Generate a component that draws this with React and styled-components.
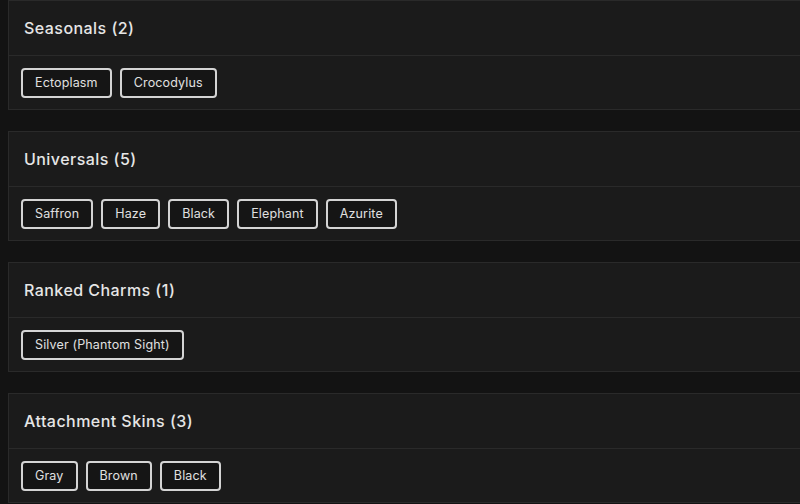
import styled, { createGlobalStyle } from "styled-components"

const GlobalStyle = createGlobalStyle`
  html, body {
    margin: 0;
    padding: 0;
    background: #131313;
    overflow: hidden;
  }
  body {
    font-family: "Inter", "Liberation Sans", sans-serif;
  }
`

const Page = styled.div`
  display: flex;
  flex-direction: column;
  gap: 21px;
  padding: 0 0 0 8px;
  width: 820px;
`
const Card = styled.section`
  background: #1b1b1b;
  border: 1px solid #2a2a2a;
`
const Header = styled.div`
  height: 54px;
  display: flex;
  align-items: center;
  padding: 0 15px;
  border-bottom: 1px solid #2a2a2a;

  h2 {
    margin: 0;
    font-size: 16px;
    font-weight: 500;
    color: #e6e6e6;
    letter-spacing: 0.45px;
  }
`
const Body = styled.div`
  height: 53px;
  display: flex;
  align-items: center;
  gap: 8px;
  padding: 0 12px;
`
const Tag = styled.button`
  height: 30px;
  padding: 0 12px;
  background: #151515;
  border: 2px solid #d4d4d4;
  border-radius: 4px;
  color: #e0e0e0;
  font-family: "Inter", "Liberation Sans", sans-serif;
  font-size: 12.5px;
  font-weight: 400;
  letter-spacing: 0.15px;
  cursor: pointer;
`

const groups = [
  { title: "Seasonals", items: ["Ectoplasm", "Crocodylus"] },
  { title: "Universals", items: ["Saffron", "Haze", "Black", "Elephant", "Azurite"] },
  { title: "Ranked Charms", items: ["Silver (Phantom Sight)"] },
  { title: "Attachment Skins", items: ["Gray", "Brown", "Black"] },
]

const App = () => (
  <>
    <GlobalStyle />
    <Page>
      {groups.map((g) => (
        <Card key={g.title}>
          <Header>
            <h2>
              {g.title} ({g.items.length})
            </h2>
          </Header>
          <Body>
            {g.items.map((item) => (
              <Tag key={item}>{item}</Tag>
            ))}
          </Body>
        </Card>
      ))}
    </Page>
  </>
)

export default App
